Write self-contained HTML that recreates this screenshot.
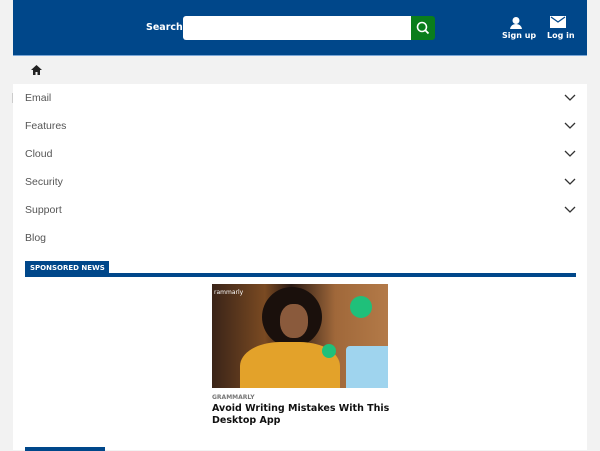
<!DOCTYPE html>
<html><head><style>
*{margin:0;padding:0;box-sizing:border-box}
body{width:600px;height:450px;background:#f2f2f2;font-family:"DejaVu Sans","Liberation Sans",sans-serif;position:relative;overflow:hidden}
.a{position:absolute}
.hdr{left:13px;top:0;width:574px;height:56px;background:#00478a;border-bottom:1px solid #7aa6d6}
.lbl{color:#fff;font-weight:bold;font-size:9px;white-space:nowrap}
.menu{left:13px;top:84px;width:574px;height:366px;background:#fff}
.mi{position:absolute;left:12px;font-size:10px;color:#555;font-family:"Liberation Sans",sans-serif;font-size:10.5px}
.chev{position:absolute;left:551px;width:12px;height:8px}
</style></head><body>
<div class="a hdr">
 <div class="a lbl" style="left:133px;top:22px;font-size:9.5px">Search</div>
 <div class="a" style="left:170px;top:16px;width:230px;height:24px;background:#fff;border-radius:3px 0 0 3px"></div>
 <div class="a" style="left:398px;top:16px;width:24px;height:24px;background:#0a7d1c;border-radius:0 3px 3px 0">
  <svg width="24" height="24"><circle cx="11" cy="11" r="4.5" fill="none" stroke="#fff" stroke-width="1.6"/><line x1="14.3" y1="14.3" x2="17.5" y2="17.5" stroke="#fff" stroke-width="1.8"/></svg></div>
 <svg class="a" style="left:496px;top:16px" width="14" height="14"><circle cx="7" cy="4.5" r="3.5" fill="#fff"/><path d="M1 13 Q2 8 7 8 Q12 8 13 13Z" fill="#fff"/></svg>
 <div class="a lbl" style="left:489px;top:31px;font-size:8px">Sign up</div>
 <svg class="a" style="left:537px;top:16px" width="16" height="12"><rect width="16" height="12" fill="#fff"/><path d="M1 1 L8 6 L15 1" fill="none" stroke="#00478a" stroke-width="1.2"/></svg>
 <div class="a lbl" style="left:534px;top:31px;font-size:8px">Log in</div>
</div>
<svg class="a" style="left:31px;top:65px" width="11" height="10"><path d="M5.5 0 L11 5 H9 V10 H6.5 V7 H4.5 V10 H2 V5 H0Z" fill="#222"/></svg>
<div class="a" style="left:12px;top:93px;width:1px;height:10px;background:#ccc"></div>
<div class="a menu">
 <div class="mi" style="top:8px">Email</div><svg class="chev" style="top:10px"><path d="M1 1 L6 6 L11 1" fill="none" stroke="#333" stroke-width="1.3"/></svg>
 <div class="mi" style="top:36px">Features</div><svg class="chev" style="top:38px"><path d="M1 1 L6 6 L11 1" fill="none" stroke="#333" stroke-width="1.3"/></svg>
 <div class="mi" style="top:64px">Cloud</div><svg class="chev" style="top:66px"><path d="M1 1 L6 6 L11 1" fill="none" stroke="#333" stroke-width="1.3"/></svg>
 <div class="mi" style="top:92px">Security</div><svg class="chev" style="top:94px"><path d="M1 1 L6 6 L11 1" fill="none" stroke="#333" stroke-width="1.3"/></svg>
 <div class="mi" style="top:120px">Support</div><svg class="chev" style="top:122px"><path d="M1 1 L6 6 L11 1" fill="none" stroke="#333" stroke-width="1.3"/></svg>
 <div class="mi" style="top:148px">Blog</div>
 <div class="a" style="left:12px;top:177px;width:84px;height:14px;background:#00478a;color:#fff;font-size:7px;font-weight:bold;padding:3px 0 0 5px;white-space:nowrap">SPONSORED NEWS</div>
 <div class="a" style="left:12px;top:189px;width:551px;height:4px;background:#00478a"></div>
 <div class="a" style="left:199px;top:200px;width:176px;height:104px;background:linear-gradient(90deg,#3a2418 0%,#7a4a22 30%,#2a1a14 45%,#a0683a 70%,#b37a48 100%);overflow:hidden">
  <div class="a" style="left:50px;top:3px;width:60px;height:60px;border-radius:50%;background:#1a100c"></div>
  <div class="a" style="left:68px;top:20px;width:28px;height:34px;border-radius:45%;background:#8a5a3c"></div>
  <div class="a" style="left:28px;top:58px;width:100px;height:60px;border-radius:40% 40% 0 0;background:#e3a22a"></div>
  <div class="a" style="left:134px;top:62px;width:50px;height:50px;border-radius:4px;background:#9fd4ee"></div>
  <div class="a" style="left:138px;top:12px;width:22px;height:22px;border-radius:50%;background:#1fc07a"></div>
  <div class="a" style="left:110px;top:60px;width:14px;height:14px;border-radius:50%;background:#1fc07a"></div>
  <div class="a" style="left:2px;top:5px;color:#fff;font-size:6px">rammarly</div>
 </div>
 <div class="a" style="left:199px;top:310px;font-size:6px;font-weight:bold;color:#777">GRAMMARLY</div>
 <div class="a" style="left:199px;top:319px;width:190px;font-size:9.5px;font-weight:bold;color:#111;line-height:12px">Avoid Writing Mistakes With This Desktop App</div>
 <div class="a" style="left:12px;top:363px;width:80px;height:4px;background:#00478a"></div>
</div>
</body></html>
